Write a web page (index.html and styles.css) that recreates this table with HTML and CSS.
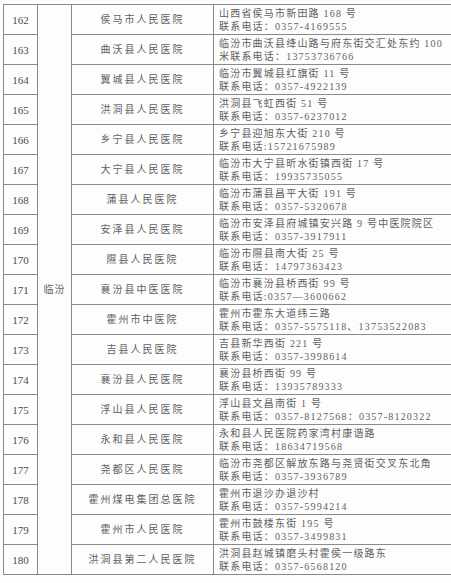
FILE: index.html
```html
<!DOCTYPE html>
<html lang="zh-CN">
<head>
<meta charset="utf-8">
<title>临汾 医院列表</title>
<link rel="stylesheet" href="styles.css">
</head>
<body>
<table class="list">
<colgroup>
<col class="c-no"><col class="c-city"><col class="c-name"><col class="c-addr">
</colgroup>
<tbody>
<tr><td class="no">162</td><td class="city" rowspan="19">临汾</td><td class="name">侯马市人民医院</td><td class="addr"><div>山西省侯马市新田路 168 号</div><div>联系电话：0357-4169555</div></td></tr>
<tr><td class="no">163</td><td class="name">曲沃县人民医院</td><td class="addr"><div>临汾市曲沃县绛山路与府东街交汇处东约 100</div><div>米联系电话：13753736766</div></td></tr>
<tr><td class="no">164</td><td class="name">翼城县人民医院</td><td class="addr"><div>临汾市翼城县红旗街 11 号</div><div>联系电话：0357-4922139</div></td></tr>
<tr><td class="no">165</td><td class="name">洪洞县人民医院</td><td class="addr"><div>洪洞县飞虹西街 51 号</div><div>联系电话：0357-6237012</div></td></tr>
<tr><td class="no">166</td><td class="name">乡宁县人民医院</td><td class="addr"><div>乡宁县迎旭东大街 210 号</div><div>联系电话:15721675989</div></td></tr>
<tr><td class="no">167</td><td class="name">大宁县人民医院</td><td class="addr"><div>临汾市大宁县昕水街镇西街 17 号</div><div>联系电话：19935735055</div></td></tr>
<tr><td class="no">168</td><td class="name">蒲县人民医院</td><td class="addr"><div>临汾市蒲县昌平大街 191 号</div><div>联系电话：0357-5320678</div></td></tr>
<tr><td class="no">169</td><td class="name">安泽县人民医院</td><td class="addr"><div>临汾市安泽县府城镇安兴路 9 号中医院院区</div><div>联系电话：0357-3917911</div></td></tr>
<tr><td class="no">170</td><td class="name">隰县人民医院</td><td class="addr"><div>临汾市隰县南大街 25 号</div><div>联系电话：14797363423</div></td></tr>
<tr><td class="no">171</td><td class="name">襄汾县中医医院</td><td class="addr"><div>临汾市襄汾县桥西街 99 号</div><div>联系电话:0357—3600662</div></td></tr>
<tr><td class="no">172</td><td class="name">霍州市中医院</td><td class="addr"><div>霍州市霍东大道纬三路</div><div>联系电话：0357-5575118、13753522083</div></td></tr>
<tr><td class="no">173</td><td class="name">吉县人民医院</td><td class="addr"><div>吉县新华西街 221 号</div><div>联系电话：0357-3998614</div></td></tr>
<tr><td class="no">174</td><td class="name">襄汾县人民医院</td><td class="addr"><div>襄汾县桥西街 99 号</div><div>联系电话：13935789333</div></td></tr>
<tr><td class="no">175</td><td class="name">浮山县人民医院</td><td class="addr"><div>浮山县文昌南街 1 号</div><div>联系电话：0357-8127568：0357-8120322</div></td></tr>
<tr><td class="no">176</td><td class="name">永和县人民医院</td><td class="addr"><div>永和县人民医院药家湾村康谐路</div><div>联系电话：18634719568</div></td></tr>
<tr><td class="no">177</td><td class="name">尧都区人民医院</td><td class="addr"><div>临汾市尧都区解放东路与尧贤街交叉东北角</div><div>联系电话：0357-3936789</div></td></tr>
<tr><td class="no">178</td><td class="name">霍州煤电集团总医院</td><td class="addr"><div>霍州市退沙办退沙村</div><div>联系电话：0357-5994214</div></td></tr>
<tr><td class="no">179</td><td class="name">霍州市人民医院</td><td class="addr"><div>霍州市鼓楼东街 195 号</div><div>联系电话：0357-3499831</div></td></tr>
<tr><td class="no">180</td><td class="name">洪洞县第二人民医院</td><td class="addr"><div>洪洞县赵城镇磨头村霍侯一级路东</div><div>联系电话：0357-6568120</div></td></tr>
</tbody>
</table>
</body>
</html>
```

FILE: styles.css
```css
html, body {
  margin: 0;
  padding: 0;
  background: #fdfdfd;
}

body {
  font-family: "Liberation Serif", "Noto Sans CJK SC", serif;
  color: #606060;
}

.list {
  border-collapse: collapse;
  table-layout: fixed;
  width: 448px;
  margin: 4px 0 0 3px;
}

.c-no { width: 34px; }
.c-city { width: 34px; }
.c-name { width: 142px; }
.c-addr { width: 238px; }

.list tr {
  height: 30px;
}

.list td {
  border: 1px solid #8a8a8a;
  padding: 0;
  vertical-align: middle;
  white-space: nowrap;
  overflow: hidden;
  line-height: 12px;
}

.no {
  text-align: center;
  font-size: 11px;
  color: #4a4a4a;
}

.city {
  text-align: center;
  font-size: 10px;
  letter-spacing: 1px;
}

.name {
  text-align: center;
  font-size: 10px;
  letter-spacing: 2px;
}

.addr {
  font-size: 10px;
  letter-spacing: 1.2px;
  padding-left: 5px !important;
}

.addr div {
  height: 13px;
  line-height: 13px;
  overflow: visible;
}
```
